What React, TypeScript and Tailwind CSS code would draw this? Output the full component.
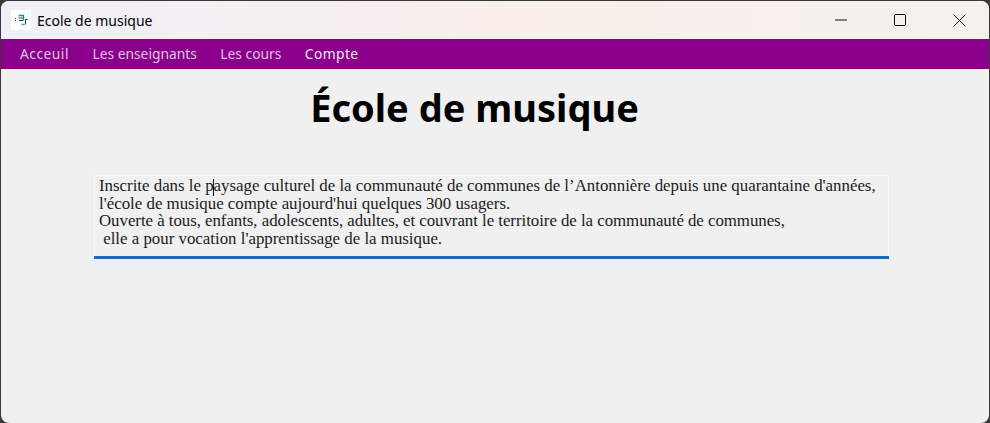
const MENU = [
  { label: "Acceuil", cls: "tracking-[0.5px] text-[#e3c3e3]" },
  { label: "Les enseignants", cls: "text-[#e3c3e3]" },
  { label: "Les cours", cls: "text-[#e3c3e3]" },
  { label: "Compte", cls: "tracking-[0.4px] text-[#f4e6f4]" },
];

function AppIcon() {
  return (
    <div className="flex h-5 w-5 items-center justify-center bg-white">
      <svg width="14" height="13" viewBox="0 0 14 13" fill="none">
        <path d="M1 4.500h2M1 6.500h2" stroke="#333" strokeWidth="1" strokeDasharray="1 1" />
        <path d="M4.500 1.500h5v5" stroke="#0f9a86" strokeWidth="1.300" />
        <path d="M4.500 4h5M5 6.500h4" stroke="#2b4a48" strokeWidth="1" />
        <path d="M11.500 5.500v5M11.500 5.500h2" stroke="#333" strokeWidth="1" />
        <path d="M7.500 10.500h3" stroke="#22b8a0" strokeWidth="1.600" />
      </svg>
    </div>
  );
}

function TitleBar() {
  return (
    <div className="flex h-[38px] items-center bg-gradient-to-r from-[#f0f0f8] via-[#f9eeea] to-[#f5f1ed] pl-[10px]">
      <AppIcon />
      <span className="ml-[6px] text-[14px] text-black">Ecole de musique</span>
      <div className="ml-auto flex h-full items-center">
        <button className="flex h-full w-[58px] items-center justify-center">
          <svg width="12" height="12" viewBox="0 0 12 12">
            <path d="M0 6h12" stroke="#111" strokeWidth="1" />
          </svg>
        </button>
        <button className="flex h-full w-[59px] items-center justify-center">
          <svg width="12" height="12" viewBox="0 0 12 12" fill="none">
            <rect x="0.500" y="0.500" width="11" height="11" rx="1.500" stroke="#111" strokeWidth="1" />
          </svg>
        </button>
        <button className="flex h-full w-[60px] items-center justify-center">
          <svg width="13" height="13" viewBox="0 0 13 13">
            <path d="M0.500 0.500l12 12M12.500 0.500l-12 12" stroke="#111" strokeWidth="1" />
          </svg>
        </button>
      </div>
    </div>
  );
}

function MenuBar() {
  return (
    <nav className="flex h-[30px] items-center gap-[23.500px] bg-[#8b008b] pl-[19px] text-[13.800px]">
      {MENU.map((item) => (
        <span key={item.label} className={item.cls}>
          {item.label}
        </span>
      ))}
    </nav>
  );
}

export default function App() {
  return (
    <div className="h-[423px] w-[990px] overflow-hidden bg-[#3a3a3a] pt-px font-['Noto_Sans',sans-serif]">
      <div className="mx-px flex h-[422px] flex-col overflow-hidden rounded-[8px] bg-[#f0f0f0]">
        <TitleBar />
        <MenuBar />
        <h1 className="mt-[5px] pr-[41px] text-center text-[38px] leading-[66px] font-bold text-black">École de musique</h1>
        <div className="mt-[35px] ml-[93px] h-[84px] w-[795px] border border-b-0 border-[#f8f8f8] bg-[#f0f0f0]">
          <div className="relative h-[80px] pl-1 pt-px font-['Liberation_Serif',serif] text-[16.850px] leading-[17.500px] whitespace-pre text-[#1c1c1c]">
            <span className="absolute left-[118px] top-[3px] h-[17px] w-px bg-[#111]" />
            <p>Inscrite dans le paysage culturel de la communauté de communes de l’Antonnière depuis une quarantaine d'années,</p>
            <p>l'école de musique compte aujourd'hui quelques 300 usagers.</p>
            <p className="tracking-[-0.040px]">Ouverte à tous, enfants, adolescents, adultes, et couvrant le territoire de la communauté de communes,</p>
            <p> elle a pour vocation l'apprentissage de la musique.</p>
          </div>
          <div className="-mx-px h-[3px] bg-[#1a6dba]" />
        </div>
      </div>
    </div>
  );
}
